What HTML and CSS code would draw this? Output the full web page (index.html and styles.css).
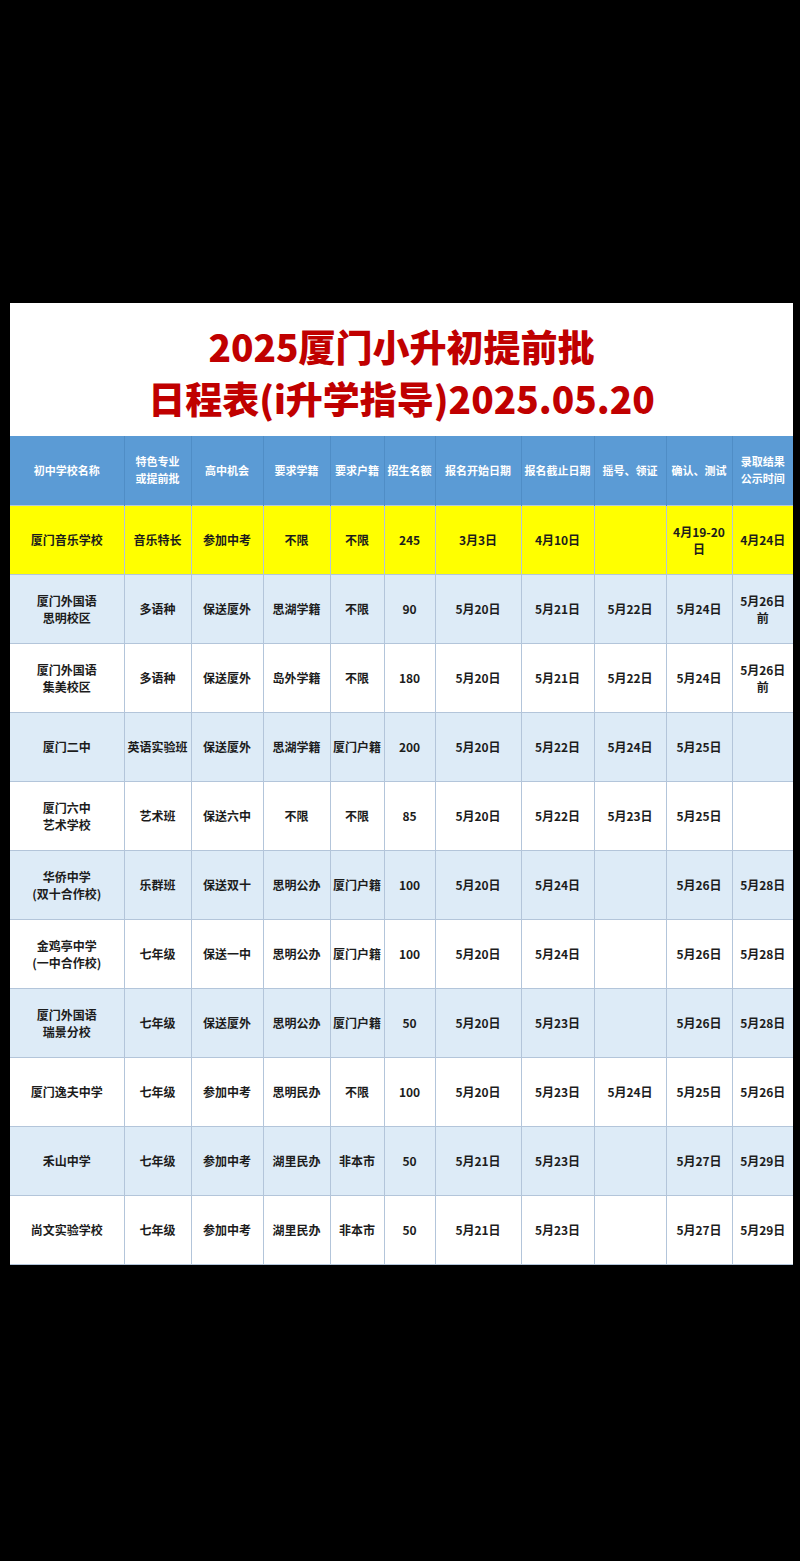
FILE: index.html
```html
<!DOCTYPE html>
<html lang="zh-CN">
<head>
<meta charset="utf-8">
<title>2025厦门小升初提前批日程表</title>
<link rel="stylesheet" href="styles.css">
</head>
<body>
<div class="panel">
  <h1 class="title">2025厦门小升初提前批<br>日程表(i升学指导)2025.05.20</h1>
  <table class="sched">
    <colgroup>
      <col class="c1"><col class="c2"><col class="c3"><col class="c4"><col class="c5"><col class="c6"><col class="c7"><col class="c8"><col class="c9"><col class="c10"><col class="c11">
    </colgroup>
    <thead>
      <tr>
        <th>初中学校名称</th><th>特色专业<br>或提前批</th><th>高中机会</th><th>要求学籍</th><th>要求户籍</th><th>招生名额</th><th>报名开始日期</th><th>报名截止日期</th><th>摇号、领证</th><th>确认、测试</th><th>录取结果<br>公示时间</th>
      </tr>
    </thead>
    <tbody>
      <tr class="yellow"><td>厦门音乐学校</td><td>音乐特长</td><td>参加中考</td><td>不限</td><td>不限</td><td>245</td><td>3月3日</td><td>4月10日</td><td></td><td>4月19-20<br>日</td><td>4月24日</td></tr>
      <tr class="blue"><td>厦门外国语<br>思明校区</td><td>多语种</td><td>保送厦外</td><td>思湖学籍</td><td>不限</td><td>90</td><td>5月20日</td><td>5月21日</td><td>5月22日</td><td>5月24日</td><td>5月26日<br>前</td></tr>
      <tr class="white"><td>厦门外国语<br>集美校区</td><td>多语种</td><td>保送厦外</td><td>岛外学籍</td><td>不限</td><td>180</td><td>5月20日</td><td>5月21日</td><td>5月22日</td><td>5月24日</td><td>5月26日<br>前</td></tr>
      <tr class="blue"><td>厦门二中</td><td>英语实验班</td><td>保送厦外</td><td>思湖学籍</td><td>厦门户籍</td><td>200</td><td>5月20日</td><td>5月22日</td><td>5月24日</td><td>5月25日</td><td></td></tr>
      <tr class="white"><td>厦门六中<br>艺术学校</td><td>艺术班</td><td>保送六中</td><td>不限</td><td>不限</td><td>85</td><td>5月20日</td><td>5月22日</td><td>5月23日</td><td>5月25日</td><td></td></tr>
      <tr class="blue"><td>华侨中学<br>(双十合作校)</td><td>乐群班</td><td>保送双十</td><td>思明公办</td><td>厦门户籍</td><td>100</td><td>5月20日</td><td>5月24日</td><td></td><td>5月26日</td><td>5月28日</td></tr>
      <tr class="white"><td>金鸡亭中学<br>(一中合作校)</td><td>七年级</td><td>保送一中</td><td>思明公办</td><td>厦门户籍</td><td>100</td><td>5月20日</td><td>5月24日</td><td></td><td>5月26日</td><td>5月28日</td></tr>
      <tr class="blue"><td>厦门外国语<br>瑞景分校</td><td>七年级</td><td>保送厦外</td><td>思明公办</td><td>厦门户籍</td><td>50</td><td>5月20日</td><td>5月23日</td><td></td><td>5月26日</td><td>5月28日</td></tr>
      <tr class="white"><td>厦门逸夫中学</td><td>七年级</td><td>参加中考</td><td>思明民办</td><td>不限</td><td>100</td><td>5月20日</td><td>5月23日</td><td>5月24日</td><td>5月25日</td><td>5月26日</td></tr>
      <tr class="blue"><td>禾山中学</td><td>七年级</td><td>参加中考</td><td>湖里民办</td><td>非本市</td><td>50</td><td>5月21日</td><td>5月23日</td><td></td><td>5月27日</td><td>5月29日</td></tr>
      <tr class="white"><td>尚文实验学校</td><td>七年级</td><td>参加中考</td><td>湖里民办</td><td>非本市</td><td>50</td><td>5月21日</td><td>5月23日</td><td></td><td>5月27日</td><td>5月29日</td></tr>
    </tbody>
  </table>
</div>
</body>
</html>
```

FILE: styles.css
```css
html, body {
  margin: 0;
  padding: 0;
  background: #000;
}
body {
  height: 1561px;
  font-family: "Noto Sans CJK SC", "Noto Sans", sans-serif;
}
.panel {
  margin: 303px 0 0 10px;
  width: 783px;
  background: #fff;
}
.title {
  margin: 0;
  height: 133px;
  box-sizing: border-box;
  padding-top: 17px;
  text-align: center;
  color: #c00000;
  font-size: 37px;
  line-height: 52px;
  font-weight: 900;
  letter-spacing: 0;
}
.sched {
  width: 783px;
  table-layout: fixed;
  border-collapse: collapse;
}
.c1 { width: 114px; }
.c2 { width: 67px; }
.c3 { width: 72px; }
.c4 { width: 67px; }
.c5 { width: 54px; }
.c6 { width: 51px; }
.c7 { width: 86px; }
.c8 { width: 73px; }
.c9 { width: 72px; }
.c10 { width: 66px; }
.c11 { width: 61px; }
.sched tr {
  height: 69px;
}
.sched th,
.sched td {
  padding: 0 1px;
  text-align: center;
  vertical-align: middle;
  font-weight: 700;
  line-height: 17px;
  white-space: nowrap;
}
.sched th {
  background: #5b9bd5;
  color: #fff;
  font-size: 11px;
  border-left: 1px solid #4f8dc6;
  border-right: 1px solid #4f8dc6;
}
.sched td {
  color: #1c1c1c;
  font-size: 12px;
  border: 1px solid #b3c5da;
}
.sched tr > :first-child { border-left: none; }
.sched tr > :last-child { border-right: none; }
.yellow td { background: #ffff00; }
.blue td { background: #ddebf7; }
.white td { background: #fff; }
```
